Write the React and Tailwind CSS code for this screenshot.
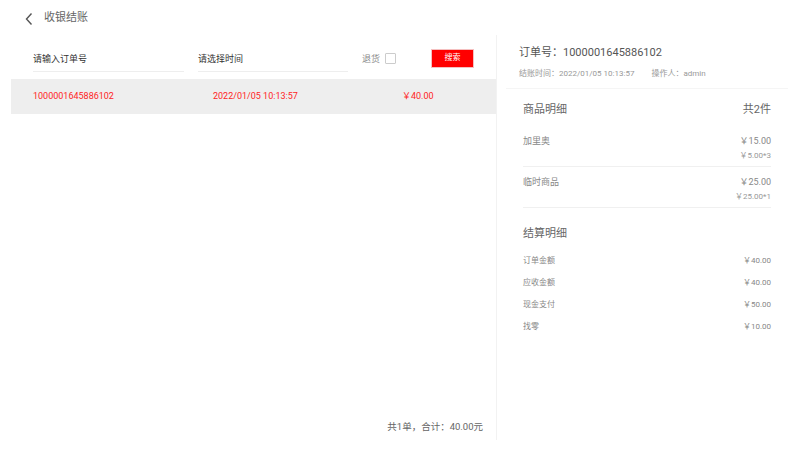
import React from "react";

const font = "font-['Roboto','Noto_Sans_CJK_SC',sans-serif]";

const items = [
  { name: "加里奥", total: "￥15.00", unit: "￥5.00*3" },
  { name: "临时商品", total: "￥25.00", unit: "￥25.00*1" },
];

const settle = [
  ["订单金额", "￥40.00"],
  ["应收金额", "￥40.00"],
  ["现金支付", "￥50.00"],
  ["找零", "￥10.00"],
];

const App = () => {
  return (
    <div className={`w-[800px] h-[450px] bg-white overflow-hidden ${font}`}>
      <header className="h-[35px] flex items-center pl-[24px] pt-[2px]">
        <svg width="10" height="14" viewBox="0 0 10 14" className="mr-[10px]">
          <path d="M7.5 1.5 L2.5 7 L7.5 12.5" fill="none" stroke="#555" strokeWidth="1.4" />
        </svg>
        <span className="text-[11px] text-[#666]">收银结账</span>
      </header>

      <div className="flex h-[405px]">
        <section className="ml-[11px] w-[486px] border-r border-[#f2f2f2] flex flex-col">
          <div className="h-[44px] flex items-center pl-[22px]">
            <div className="mt-[6px] w-[151px] h-[24px] flex items-center border-b border-[#eeeeee] text-[9px] text-[#333]">
              请输入订单号
            </div>
            <div className="mt-[6px] ml-[14px] w-[150px] h-[24px] flex items-center border-b border-[#eeeeee] text-[9px] text-[#333]">
              请选择时间
            </div>
            <span className="mt-[5px] ml-[14px] text-[9px] text-[#888]">退货</span>
            <span className="mt-[3px] ml-[5px] w-[11px] h-[11px] border border-[#cccccc] rounded-[1px]" />
            <button className="mt-[2px] ml-[35px] w-[43px] h-[19px] bg-[#ff0000] text-white text-[8px] border border-[#f5c0c0]">
              搜索
            </button>
          </div>

          <div className="h-[35px] bg-[#eeeeee] flex items-center pl-[22px] text-[9px] text-[#ff2424]">
            <span className="w-[180px]">1000001645886102</span>
            <span className="w-[189px]">2022/01/05 10:13:57</span>
            <span>￥40.00</span>
          </div>

          <div className="flex-1" />
          <div className="h-[33px] flex justify-end pr-[13px] pt-[13px] text-[9.5px] text-[#666]">
            共1单，合计：40.00元
          </div>
        </section>

        <aside className="flex-1">
          <div className="pt-[10px] pl-[13px] pb-[8px] ml-[9px] mr-[12px] border-b border-[#f5f5f5]">
            <div className="h-[16px] flex items-center text-[11px] text-[#555]">
              订单号：1000001645886102
            </div>
            <div className="mt-[7px] h-[12px] flex items-center text-[8px] text-[#999]">
              <span>结账时间：2022/01/05 10:13:57</span>
              <span className="ml-[17px]">操作人：admin</span>
            </div>
          </div>

          <div className="pl-[26px] pr-[29px]">
            <div className="h-[37px] pt-[6px] flex items-center justify-between text-[11px] text-[#666]">
              <span>商品明细</span>
              <span>共2件</span>
            </div>
            {items.map((it) => (
              <div key={it.name} className="pt-[9px] pb-[4px] border-b border-[#f0f0f0]">
                <div className="h-[14px] flex items-center justify-between text-[9px] text-[#888]">
                  <span>{it.name}</span>
                  <span>{it.total}</span>
                </div>
                <div className="mt-[1px] h-[12px] flex items-center justify-end text-[8px] text-[#999]">
                  {it.unit}
                </div>
              </div>
            ))}

            <div className="mt-[17px] h-[18px] flex items-center text-[11px] text-[#666]">结算明细</div>
            <div className="mt-[7px]">
              {settle.map(([k, v]) => (
                <div key={k} className="h-[22px] flex items-center justify-between text-[8px] text-[#888]">
                  <span>{k}</span>
                  <span>{v}</span>
                </div>
              ))}
            </div>
          </div>
        </aside>
      </div>
    </div>
  );
};

export default App;
